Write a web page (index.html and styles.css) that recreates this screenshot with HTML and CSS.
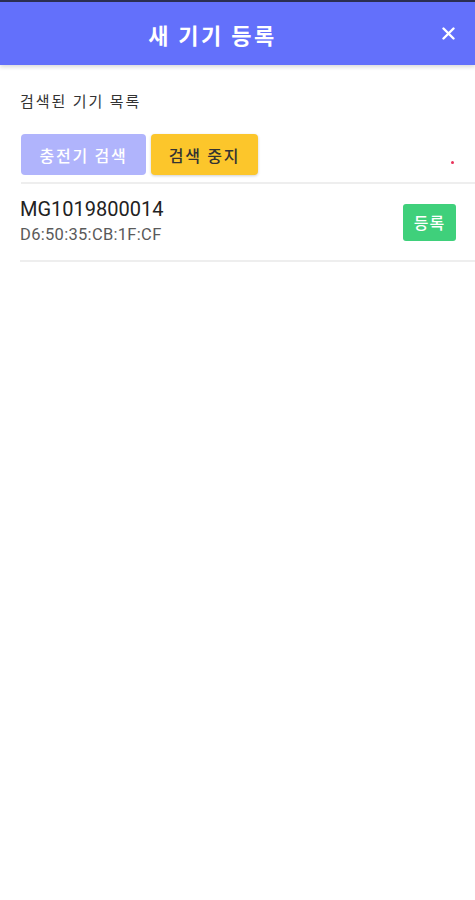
FILE: index.html
```html
<!DOCTYPE html>
<html>
<head>
    <meta charset="utf-8">
    <title>새 기기 등록</title>
    <meta name="viewport" content="width=device-width, initial-scale=1">
    <link rel="stylesheet" href="styles.css">
</head>
<body>
    <div class="statusStrip"></div>
    <div class="header">
        <h1 class="headerTitle">새 기기 등록</h1>
        <button class="closeButton" aria-label="닫기">
            <svg width="13" height="13" viewBox="0 0 13 13">
                <path d="M1.5 1.5 L11.5 11.5 M11.5 1.5 L1.5 11.5" stroke="white" stroke-width="2.4" stroke-linecap="round"/>
            </svg>
        </button>
    </div>

    <div class="content">
        <p class="sectionLabel">검색된 기기 목록</p>

        <div class="buttonRow">
            <button class="searchButton" disabled>충전기 검색</button>
            <button class="stopButton">검색 중지</button>
            <span class="scanDot"></span>
        </div>

        <div class="deviceList">
            <div class="deviceItem">
                <div class="deviceInfo">
                    <div class="deviceName">MG1019800014</div>
                    <div class="deviceMac">D6:50:35:CB:1F:CF</div>
                </div>
                <button class="registerButton">등록</button>
            </div>
        </div>
    </div>
</body>
</html>
```

FILE: styles.css
```css
body {
    margin: 0;
    background: white;
    font-family: Roboto, "Noto Sans CJK KR", sans-serif;
    color: #222;
}
.statusStrip {
    height: 2px;
    background: #2c2f52;
}
.header {
    display: flex;
    align-items: center;
    height: 63px;
    background: #6370fb;
    box-shadow: 0px 2px 4px 0px #00000026;
}
.headerTitle {
    flex: 1;
    margin: 0;
    padding-left: 2px;
    text-align: center;
    font-family: "Noto Sans CJK KR", sans-serif;
    font-size: 22px;
    font-weight: bold;
    color: white;
    letter-spacing: 2.5px;
}
.closeButton {
    width: 50px;
    height: 63px;
    padding: 0px;
    border: none;
    background: none;
    display: flex;
    align-items: center;
    justify-content: center;
    margin-right: 2px;
}
.content {
    padding: 0px 0px 0px 20px;
}
.sectionLabel {
    margin: 0;
    padding-top: 25px;
    height: 44px;
    font-family: "Noto Sans CJK KR", sans-serif;
    font-size: 15px;
    letter-spacing: 2px;
    color: #333;
}
.buttonRow {
    display: flex;
    align-items: flex-start;
    gap: 5px;
    margin-left: 1px;
    height: 48px;
    border-bottom: 2px solid #eeeeee;
}
.searchButton, .stopButton {
    height: 41px;
    padding: 0px;
    border: none;
    border-radius: 4px;
    font-family: "Noto Sans CJK KR", sans-serif;
    font-size: 16px;
    font-weight: 500;
    letter-spacing: 1.8px;
    box-shadow: 0px 1px 3px 0px #00000030;
}
.searchButton {
    width: 125px;
    background: #b0b4fc;
    color: white;
    box-shadow: none;
}
.stopButton {
    width: 107px;
    background: #fcc62b;
    color: #333;
}
.scanDot {
    width: 3px;
    height: 3px;
    border-radius: 2px;
    background: #e8325a;
    margin-left: auto;
    margin-right: 21px;
    margin-top: 27px;
}
.deviceItem {
    display: flex;
    align-items: center;
    height: 76px;
    border-bottom: 2px solid #eeeeee;
}
.deviceInfo {
    flex: 1;
}
.deviceName {
    font-size: 20px;
    color: #222;
    line-height: 24px;
}
.deviceMac {
    margin-top: 2px;
    font-size: 16.5px;
    color: #5a5a5a;
    line-height: 24px;
    letter-spacing: 0.3px;
}
.registerButton {
    width: 53px;
    height: 37px;
    margin-right: 19px;
    border: none;
    border-radius: 3px;
    background: #3fd07b;
    color: white;
    font-family: "Noto Sans CJK KR", sans-serif;
    font-size: 16px;
    font-weight: 500;
    letter-spacing: 1px;
}
```
